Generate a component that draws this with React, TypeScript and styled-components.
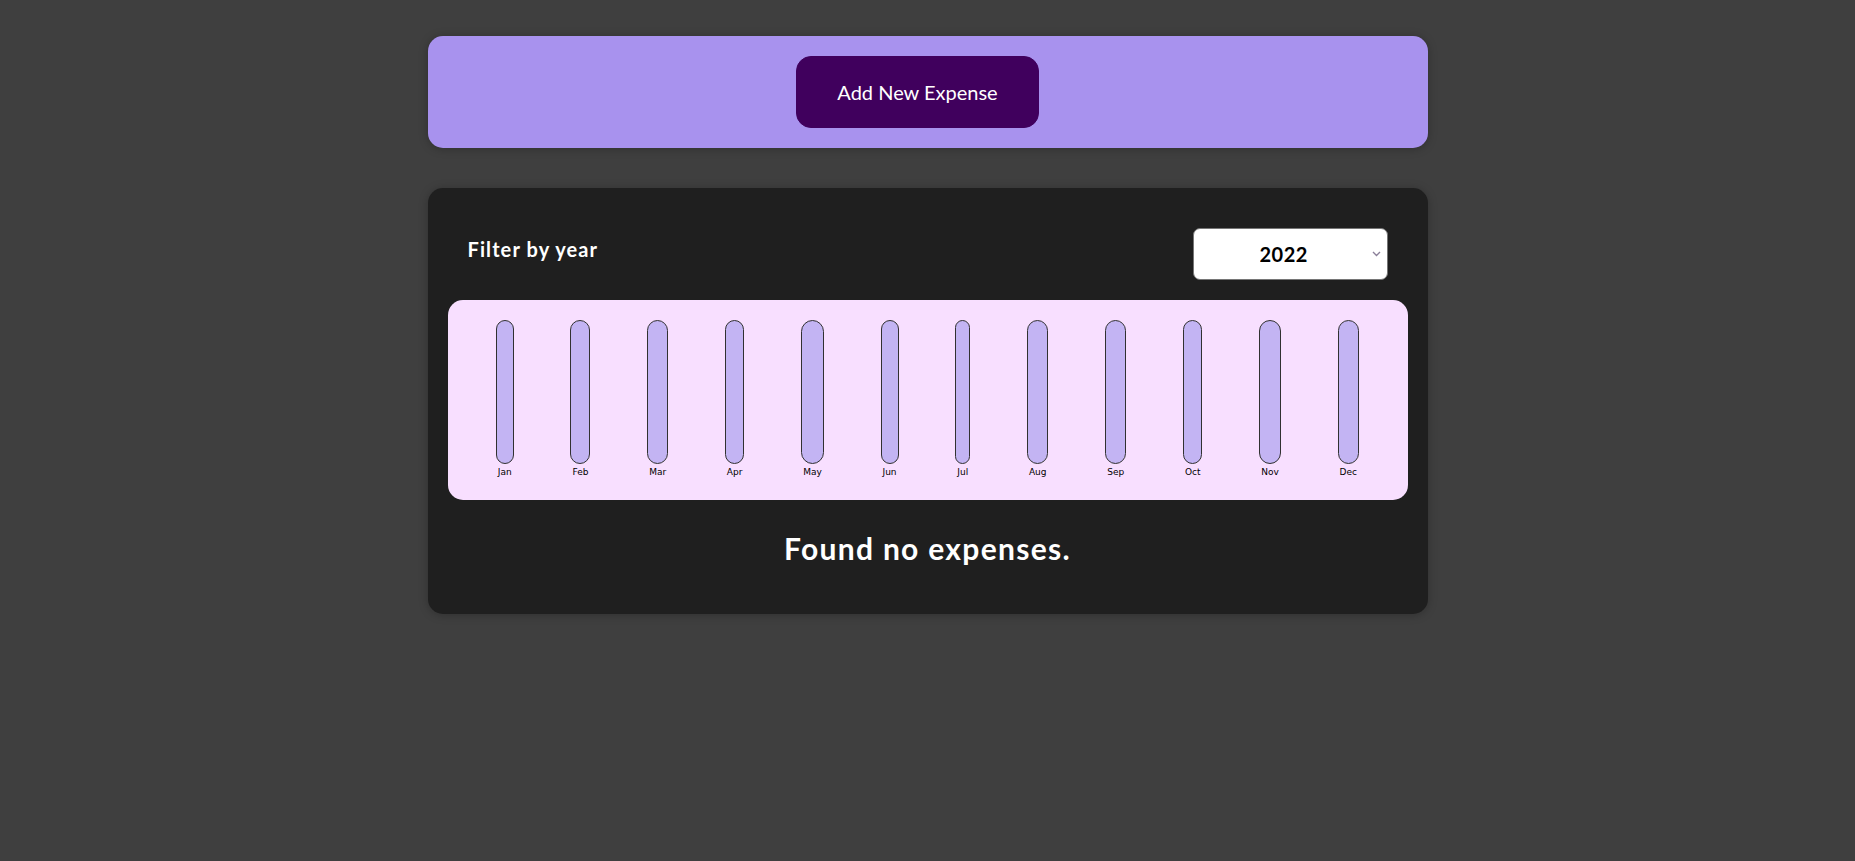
import React, { useState } from "react";
import styled, { createGlobalStyle } from "styled-components";

const GlobalStyle = createGlobalStyle`
  * { box-sizing: border-box; }
  html, body { margin: 0; padding: 0; }
  body {
    background-color: #3f3f3f;
    font-family: Lato, "Noto Sans", sans-serif;
    font-size: 20px;
  }
`;

const Page = styled.div`
  padding-top: 36px;
  padding-bottom: 40px;
`;

const Card = styled.div`
  border-radius: 15px;
  box-shadow: 0 1px 10px rgba(0, 0, 0, 0.25);
  width: 1000px;
  max-width: 95%;
  margin: 0 auto;
  padding: 20px;
`;

const NewExpense = styled(Card)`
  background-color: #a892ee;
  text-align: center;
  margin-bottom: 40px;
`;

const AddButton = styled.button`
  font: inherit;
  line-height: 30px;
  cursor: pointer;
  padding: 20px 40px;
  margin-right: 20px;
  border: 1px solid #40005d;
  background-color: #40005d;
  color: white;
  border-radius: 15px;
`;

const Expenses = styled(Card)`
  background-color: #1f1f1f;
`;

const Filter = styled.div`
  color: white;
  padding: 0 20px;
`;

const FilterControl = styled.div`
  display: flex;
  width: 100%;
  align-items: center;
  justify-content: space-between;
  margin: 20px 0;
`;

const FilterLabel = styled.label`
  font-weight: bold;
  margin-bottom: 10px;
  font-size: 20px;
  letter-spacing: 1.1px;
`;

const SelectWrap = styled.div`
  position: relative;
  display: inline-flex;
`;

const Select = styled.select`
  appearance: none;
  -webkit-appearance: none;
  font: inherit;
  font-weight: bold;
  font-size: 20px;
  letter-spacing: 0.5px;
  width: 195px;
  height: 52px;
  padding: 10px 60px 10px 66px;
  border-radius: 7px;
  border: 1px solid #767676;
  background: white;
  color: black;
`;

const Chevron = styled.svg`
  position: absolute;
  right: 7px;
  top: 50%;
  width: 9px;
  height: 6px;
  margin-top: -3px;
  pointer-events: none;
`;

const Chart = styled.div`
  padding: 20px;
  border-radius: 15px;
  background-color: #f8dfff;
  text-align: center;
  display: flex;
  justify-content: space-around;
  height: 200px;
`;

const Bar = styled.div`
  height: 100%;
  display: flex;
  flex-direction: column;
  align-items: center;
`;

const BarInner = styled.div`
  height: 100%;
  width: 100%;
  border: 1px solid #313131;
  border-radius: 15px;
  background-color: #c3b4f3;
  overflow: hidden;
  display: flex;
  flex-direction: column;
  justify-content: flex-end;
`;

const BarLabel = styled.div`
  font-family: "DejaVu Sans", sans-serif;
  font-size: 9px;
  line-height: 16px;
  text-align: center;
  color: #000;
  padding: 0 2px;
`;

const Fallback = styled.h2`
  color: white;
  text-align: center;
  font-size: 30px;
  font-weight: bold;
  letter-spacing: 1.3px;
  line-height: 44px;
  margin: 26px 0 24px;
`;

const months = ["Jan", "Feb", "Mar", "Apr", "May", "Jun", "Jul", "Aug", "Sep", "Oct", "Nov", "Dec"];

export default function App() {
  const [year, setYear] = useState("2022");
  return (
    <>
      <GlobalStyle />
      <Page>
        <NewExpense>
          <AddButton>Add New Expense</AddButton>
        </NewExpense>
        <Expenses>
          <Filter>
            <FilterControl>
              <FilterLabel>Filter by year</FilterLabel>
              <SelectWrap>
                <Select value={year} onChange={(e) => setYear(e.target.value)}>
                  <option value="2022">2022</option>
                  <option value="2021">2021</option>
                  <option value="2020">2020</option>
                  <option value="2019">2019</option>
                </Select>
                <Chevron viewBox="0 0 9 6">
                  <path d="M1 1 L4.5 4.5 L8 1" fill="none" stroke="#8a7f99" strokeWidth="1.4" />
                </Chevron>
              </SelectWrap>
            </FilterControl>
          </Filter>
          <Chart>
            {months.map((m) => (
              <Bar key={m}>
                <BarInner />
                <BarLabel>{m}</BarLabel>
              </Bar>
            ))}
          </Chart>
          <Fallback>Found no expenses.</Fallback>
        </Expenses>
      </Page>
    </>
  );
}
